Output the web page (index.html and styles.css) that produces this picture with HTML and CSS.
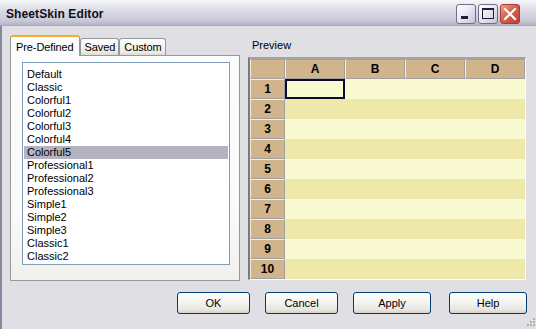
FILE: index.html
```html
<!DOCTYPE html>
<html>
<head>
<meta charset="utf-8">
<link rel="stylesheet" href="styles.css">
</head>
<body>
<div class="window">
  <div class="titlebar">
    <span class="title">SheetSkin Editor</span>
    <div class="tb-buttons">
      <span class="tb-btn"><svg width="20" height="20" viewBox="0 0 20 20"><rect x="5" y="12" width="7" height="3" fill="#1e1e3c"/></svg></span>
      <span class="tb-btn"><svg width="20" height="20" viewBox="0 0 20 20"><rect x="4.5" y="4.5" width="11" height="10" fill="none" stroke="#1e1e3c" stroke-width="1"/><rect x="4" y="4" width="12" height="2" fill="#1e1e3c"/></svg></span>
      <span class="tb-btn tb-close"><svg width="20" height="20" viewBox="0 0 20 20"><path d="M5 5 L15 15 M15 5 L5 15" stroke="#fff" stroke-width="2.2" stroke-linecap="square"/></svg></span>
    </div>
  </div>
  <div class="content">
    <div class="main">
      <div class="left">
        <div class="tabs">
          <span class="tab tab-active">Pre-Defined</span>
          <span class="tab">Saved</span>
          <span class="tab">Custom</span>
        </div>
        <div class="tabpage">
          <ul class="listbox">
            <li>Default</li>
            <li>Classic</li>
            <li>Colorful1</li>
            <li>Colorful2</li>
            <li>Colorful3</li>
            <li>Colorful4</li>
            <li class="selected">Colorful5</li>
            <li>Professional1</li>
            <li>Professional2</li>
            <li>Professional3</li>
            <li>Simple1</li>
            <li>Simple2</li>
            <li>Simple3</li>
            <li>Classic1</li>
            <li>Classic2</li>
          </ul>
        </div>
      </div>
      <div class="right">
        <div class="preview-label">Preview</div>
        <div class="sheet">
          <div class="hdr corner"></div>
          <div class="hdr col">A</div>
          <div class="hdr col">B</div>
          <div class="hdr col">C</div>
          <div class="hdr col">D</div>

          <div class="hdr rowh">1</div><div class="cell odd active"></div><div class="cell odd"></div><div class="cell odd"></div><div class="cell odd"></div>
          <div class="hdr rowh">2</div><div class="cell even"></div><div class="cell even"></div><div class="cell even"></div><div class="cell even"></div>
          <div class="hdr rowh">3</div><div class="cell odd"></div><div class="cell odd"></div><div class="cell odd"></div><div class="cell odd"></div>
          <div class="hdr rowh">4</div><div class="cell even"></div><div class="cell even"></div><div class="cell even"></div><div class="cell even"></div>
          <div class="hdr rowh">5</div><div class="cell odd"></div><div class="cell odd"></div><div class="cell odd"></div><div class="cell odd"></div>
          <div class="hdr rowh">6</div><div class="cell even"></div><div class="cell even"></div><div class="cell even"></div><div class="cell even"></div>
          <div class="hdr rowh">7</div><div class="cell odd"></div><div class="cell odd"></div><div class="cell odd"></div><div class="cell odd"></div>
          <div class="hdr rowh">8</div><div class="cell even"></div><div class="cell even"></div><div class="cell even"></div><div class="cell even"></div>
          <div class="hdr rowh">9</div><div class="cell odd"></div><div class="cell odd"></div><div class="cell odd"></div><div class="cell odd"></div>
          <div class="hdr rowh">10</div><div class="cell even"></div><div class="cell even"></div><div class="cell even"></div><div class="cell even"></div>
        </div>
      </div>
    </div>
    <div class="buttons">
      <span class="btn">OK</span>
      <span class="btn">Cancel</span>
      <span class="btn btn-wide">Apply</span>
      <span class="btn btn-wide btn-help">Help</span>
    </div>
    <svg class="grip" width="11" height="11" viewBox="0 0 11 11">
      <g fill="#b0aeb8">
        <rect x="9" y="1" width="2" height="2"/>
        <rect x="6" y="4" width="2" height="2"/><rect x="9" y="4" width="2" height="2"/>
        <rect x="3" y="7" width="2" height="2"/><rect x="6" y="7" width="2" height="2"/><rect x="9" y="7" width="2" height="2"/>
      </g>
    </svg>
  </div>
</div>
</body>
</html>
```

FILE: styles.css
```css
* { box-sizing: border-box; }
html, body {
  margin: 0;
  padding: 0;
  width: 536px;
  height: 329px;
  overflow: hidden;
  background: #e0dfe3;
  font-family: "Liberation Sans", Arial, sans-serif;
  font-size: 11px;
  color: #000;
}
.window {
  width: 536px;
  height: 329px;
  display: flex;
  flex-direction: column;
}
.titlebar {
  height: 26px;
  flex: none;
  display: flex;
  align-items: center;
  justify-content: space-between;
  padding: 0 16px 0 6px;
  background: linear-gradient(#f8f8fb 0%, #e9e9f0 18%, #d6d6e2 50%, #c8c8d8 80%, #b2b2c6 96%, #9d9db4 100%);
}
.title {
  font-weight: bold;
  font-size: 12px;
  color: #101018;
  letter-spacing: 0.1px;
  padding-top: 1px;
}
.tb-buttons {
  display: flex;
  gap: 2px;
  padding-top: 2px;
}
.tb-btn {
  width: 20px;
  height: 20px;
  border: 1px solid #6e6e8a;
  border-radius: 3px;
  background: linear-gradient(135deg, #ffffff 0%, #e6e6f0 50%, #c4c4d6 100%);
  display: flex;
}
.tb-btn svg { margin: -1px; }
.tb-close {
  border-color: #a03c30;
  background: linear-gradient(135deg, #f0a090 0%, #d8604e 45%, #c04030 100%);
}
.content {
  flex: 1;
  position: relative;
  display: flex;
  flex-direction: column;
  border-left: 2px solid #86869c;
}
.main {
  display: flex;
  padding: 9px 0 0 8px;
  height: 257px;
}
.left {
  width: 230px;
  flex: none;
  display: flex;
  flex-direction: column;
}
.tabs {
  display: flex;
  align-items: flex-end;
  height: 20px;
  position: relative;
  z-index: 1;
}
.tab {
  height: 17px;
  padding: 2px 3px 0 4px;
  border: 1px solid #919b9c;
  border-bottom: none;
  border-radius: 3px 3px 0 0;
  background: linear-gradient(#ffffff, #ecebe6 80%, #dcdbd5);
  font-size: 11px;
  letter-spacing: -0.1px;
}
.tab-active {
  height: 21px;
  padding: 4px 5px 0 5px;
  border-top: 2px solid #f4ad2f;
  background: #fcfcfe;
  margin-bottom: -1px;
}
.tabpage {
  height: 226px;
  border: 1px solid #919b9c;
  background: linear-gradient(#fcfcfe 0%, #fafafa 70%, #f1f0ec 100%);
  padding: 6px 0 0 11px;
}
.listbox {
  list-style: none;
  margin: 0;
  width: 208px;
  height: 203px;
  border: 1px solid #7f9db9;
  background: #fff;
  padding: 5px 1px 0 1px;
}
.listbox li {
  height: 13px;
  line-height: 13px;
  padding-left: 3px;
  white-space: nowrap;
}
.listbox li.selected { background: #b3b4c0; }
.right {
  display: flex;
  flex-direction: column;
  padding-left: 8px;
}
.preview-label {
  height: 22px;
  padding: 4px 0 0 4px;
}
.sheet {
  display: grid;
  grid-template-columns: 35px repeat(4, 60px);
  grid-template-rows: repeat(11, 20px);
  width: 278px;
  height: 223px;
  border-top: 2px solid #a3a3a3;
  border-left: 2px solid #7a7a7a;
  border-right: 1px solid #ffffff;
  border-bottom: 1px solid #ffffff;
  background: #e0dfe3;
  align-content: start;
}
.hdr {
  background: #d2b48c;
  font-weight: bold;
  font-size: 12px;
  display: flex;
  align-items: center;
  justify-content: center;
  border-right: 1px solid #a0a0a0;
  border-bottom: 1px solid #a0a0a0;
  border-left: 1px solid #f4efe4;
  border-top: 1px solid #f4efe4;
}
.hdr.col, .hdr.corner { border-top-color: #a0a0a0; }
.cell.odd { background: #fafad2; }
.cell.even { background: #eee8aa; }
.cell.active { box-shadow: inset 0 0 0 2px #0b0b2e; }
.buttons {
  display: flex;
  padding: 9px 0 0 175px;
}
.btn {
  flex: none;
  width: 73px;
  height: 22px;
  margin-right: 15px;
  border: 1px solid #003c74;
  border-radius: 3px;
  background: linear-gradient(#ffffff 0%, #f3f3f0 50%, #e6e5df 85%, #d6d0c5 100%);
  display: flex;
  align-items: center;
  justify-content: center;
  font-size: 11px;
}
.btn-wide { width: 78px; }
.btn-help { margin-left: 3px; margin-right: 0; }
.grip {
  position: absolute;
  right: 1px;
  bottom: 1px;
}
```
